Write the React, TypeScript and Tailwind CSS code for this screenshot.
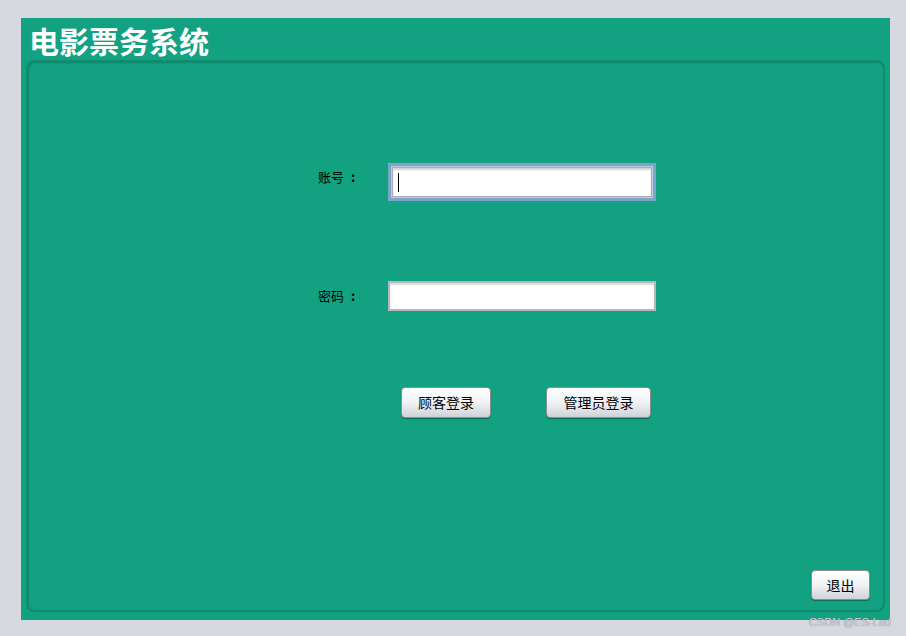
import React from "react";

const cjk = { fontFamily: '"Noto Sans CJK SC", "Noto Sans", sans-serif' };

function GlossButton({ label, className = "" }: { label: string; className?: string }) {
  return (
    <button
      type="button"
      style={cjk}
      className={`flex items-center justify-center rounded-[4px] border border-[#8a8f96] bg-gradient-to-b from-[#ffffff] via-[#f1f2f4] to-[#cfd3d8] text-[14px] text-black shadow-[0_1px_1px_rgba(0,0,0,0.35)] ${className}`}
    >
      {label}
    </button>
  );
}

function Label({ text, className = "" }: { text: string; className?: string }) {
  return (
    <span style={cjk} className={`flex w-[70px] text-[13px] text-black ${className}`}>
      {text}
      <span className="ml-[7px] font-bold">:</span>
    </span>
  );
}

export default function App() {
  return (
    <div className="h-[636px] w-[906px] overflow-hidden bg-[#d7d9e0] pl-[21px] pt-[18px]">
      <div className="relative flex h-[602px] w-[869px] flex-col bg-[#13a281] px-[5px] pb-[8px]">
        <h1
          style={cjk}
          className="h-[42px] pl-[3px] text-[30px] font-bold leading-[44px] text-white"
        >
          电影票务系统
        </h1>

        <div className="flex flex-1 flex-col rounded-[8px] border-2 border-[#0f8c6e] shadow-[inset_1px_1px_2px_rgba(0,0,0,0.2)]">
          <div className="flex items-center pl-[290px] pt-[101px]">
            <Label text="账号" className="-mt-[10px]" />
            <div className="h-[38px] w-[268px] border-[3px] border-[#7ea4c9] bg-[#b9cde0] p-[1px]">
              <div className="flex h-full w-full items-center border border-[#a9acb0] bg-white pl-[5px] shadow-[inset_0_2px_2px_rgba(0,0,0,0.18)]">
                <span className="h-[19px] w-px bg-black" />
              </div>
            </div>
          </div>

          <div className="mt-[80px] flex items-center pl-[290px]">
            <Label text="密码" />
            <div className="h-[30px] w-[268px] border-2 border-[#b5b8bc] bg-white shadow-[inset_0_2px_2px_rgba(0,0,0,0.15)]" />
          </div>

          <div className="mt-[76px] flex gap-[55px] pl-[373px]">
            <GlossButton label="顾客登录" className="h-[31px] w-[90px]" />
            <GlossButton label="管理员登录" className="h-[31px] w-[105px]" />
          </div>

          <div className="mt-auto flex justify-end pb-[10px] pr-[13px]">
            <GlossButton label="退出" className="h-[30px] w-[59px]" />
          </div>
        </div>

        <span
          style={{ fontFamily: '"Liberation Sans", Arial, sans-serif', textShadow: "0 0 1px #6f747b" }}
          className="absolute bottom-[-8px] right-[-1px] text-[11px] leading-none text-[#d0d3d8]"
        >
          CSDN @ES-Lad
        </span>
      </div>
    </div>
  );
}
